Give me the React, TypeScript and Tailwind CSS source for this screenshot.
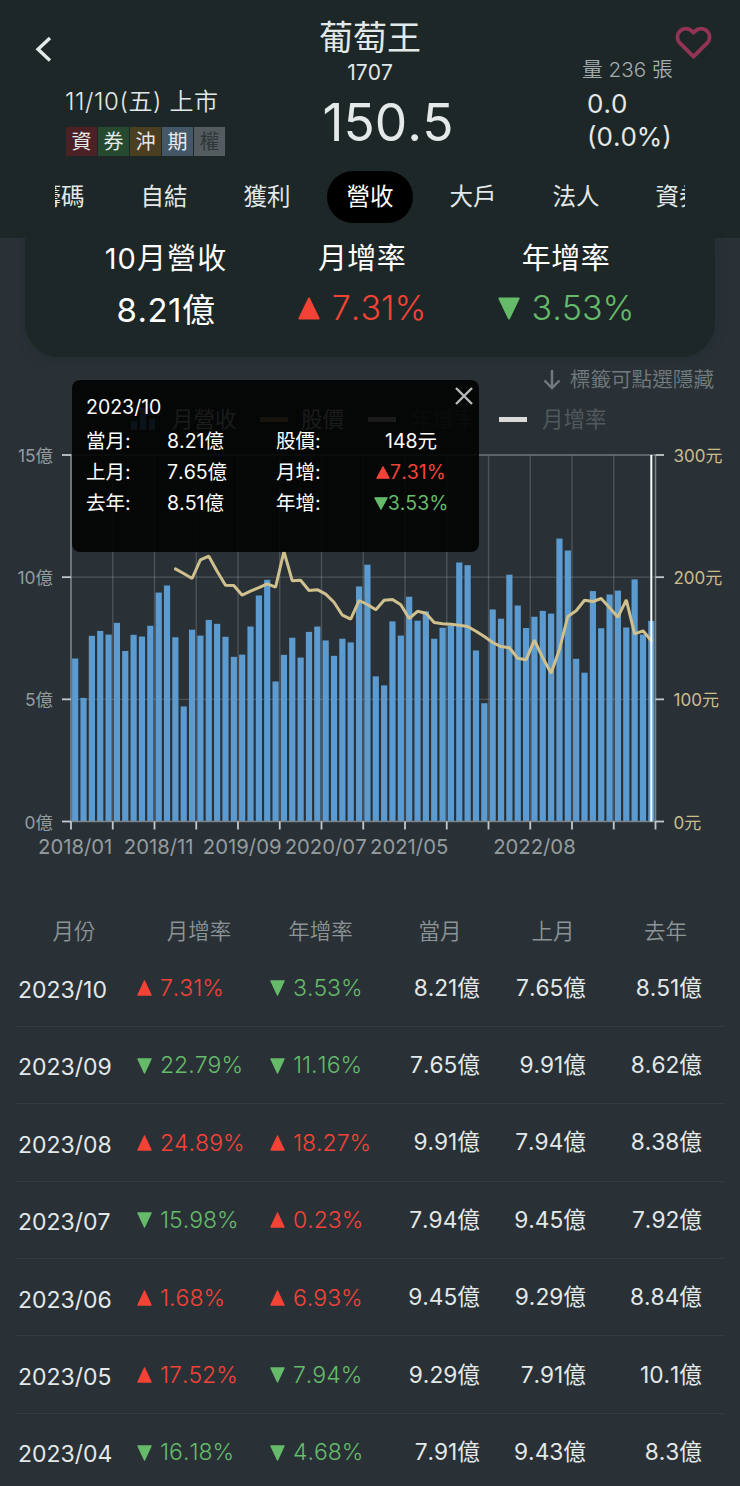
import { useState } from 'react';
import clsx from 'clsx';

/* ------------------------------------------------------------------ */
/*  Data                                                               */
/* ------------------------------------------------------------------ */

const TABS = ['籌碼', '自結', '獲利', '營收', '大戶', '法人', '資券'];

const BADGES = [
  { label: '資', className: 'bg-[#4c2125] text-[#e6eaea]' },
  { label: '券', className: 'bg-[#264a2f] text-[#e6eaea]' },
  { label: '沖', className: 'bg-[#4a3f20] text-[#e6eaea]' },
  { label: '期', className: 'bg-[#445766] text-[#e6eaea]' },
  { label: '權', className: 'bg-[#545c5f] text-[#2f3637]' },
];

// Monthly revenue in 億, 2018/01 – 2023/10
const REVENUE = [
  6.67, 5.06, 7.6, 7.8, 7.65, 8.13, 6.98, 7.64, 7.57, 8.01, 9.37, 9.66,
  7.54, 4.71, 7.85, 7.61, 8.25, 8.09, 7.56, 6.74, 6.83, 7.98, 9.25, 9.89,
  5.73, 6.82, 7.52, 6.71, 7.76, 7.98, 7.41, 6.78, 7.48, 7.33, 9.62, 10.51,
  5.94, 5.57, 8.19, 7.61, 9.2, 8.22, 8.6, 7.48, 7.93, 8.02, 10.6, 10.49,
  7.0, 4.84, 8.68, 8.3, 10.1, 8.84, 7.92, 8.38, 8.62, 8.51, 11.58, 11.09,
  6.66, 6.09, 9.43, 7.91, 9.29, 9.45, 7.94, 9.91, 7.65, 8.21,
];

// Monthly close in 元, starts one year after the revenue series
const PRICE_START = 12;
const PRICE = [
  206.8, 203, 198.9, 214.2, 217.2, 204.9, 193.4, 193.2, 185.2, 188.5, 191.5, 194.6,
  191.8, 221, 197, 197.5, 189.1, 189.7, 186.1, 179.5, 168.9, 165.6, 180.9, 177.6,
  173.3, 181.1, 181.7, 177.4, 166.2, 172.1, 170.5, 162.9, 161.8, 161.5, 160.7, 159.6,
  155.8, 151.4, 146.5, 143.2, 142.2, 133.7, 132.4, 148.4, 134, 121.4, 141, 167.8,
  172.5, 181.1, 180.1, 182.5, 174.9, 167.2, 181.5, 153.6, 156.1, 148,
];

const X_LABELS = [
  { index: 0, label: '2018/01' },
  { index: 10, label: '2018/11' },
  { index: 20, label: '2019/09' },
  { index: 30, label: '2020/07' },
  { index: 40, label: '2021/05' },
  { index: 55, label: '2022/08' },
];

const ROWS = [
  { month: '2023/10', mom: 7.31, yoy: -3.53, current: '8.21億', previous: '7.65億', lastYear: '8.51億' },
  { month: '2023/09', mom: -22.79, yoy: -11.16, current: '7.65億', previous: '9.91億', lastYear: '8.62億' },
  { month: '2023/08', mom: 24.89, yoy: 18.27, current: '9.91億', previous: '7.94億', lastYear: '8.38億' },
  { month: '2023/07', mom: -15.98, yoy: 0.23, current: '7.94億', previous: '9.45億', lastYear: '7.92億' },
  { month: '2023/06', mom: 1.68, yoy: 6.93, current: '9.45億', previous: '9.29億', lastYear: '8.84億' },
  { month: '2023/05', mom: 17.52, yoy: -7.94, current: '9.29億', previous: '7.91億', lastYear: '10.1億' },
  { month: '2023/04', mom: -16.18, yoy: -4.68, current: '7.91億', previous: '9.43億', lastYear: '8.3億' },
];

/* ------------------------------------------------------------------ */
/*  Small pieces                                                       */
/* ------------------------------------------------------------------ */

function Triangle({ up, className }: { up: boolean; className: string }) {
  return (
    <svg viewBox="0 0 16 16" fill="currentColor" stroke="currentColor" strokeWidth={1.4} strokeLinejoin="round" className={clsx('shrink-0', className)} preserveAspectRatio="none">
      <path d={up ? 'M8 1 L15 15 H1 Z' : 'M8 15 L15 1 H1 Z'} />
    </svg>
  );
}

function Change({ value, className, iconClassName }: { value: number; className: string; iconClassName: string }) {
  const up = value >= 0;
  return (
    <span className={clsx('flex items-center whitespace-nowrap', up ? 'text-[#f44336]' : 'text-[#66bb6a]', className)}>
      <Triangle up={up} className={iconClassName} />
      <span>{Math.abs(value).toFixed(2)}%</span>
    </span>
  );
}

/* ------------------------------------------------------------------ */
/*  Header                                                             */
/* ------------------------------------------------------------------ */

function Header() {
  const [active, setActive] = useState('營收');

  return (
    <header className="h-[238px] bg-[#1d2727] text-[#e3e8e8]">
      <div className="flex h-[171px]">
        <div className="w-[310px] shrink-0 pt-[34px]">
          <button className="ml-[33px] block h-[30px] w-[22px]" aria-label="返回">
            <svg viewBox="0 0 22 30" fill="none" stroke="currentColor" strokeWidth={3.4} className="h-full w-full">
              <path d="M17 4 L5 15.2 L17 26.5" />
            </svg>
          </button>
          <div className="mt-[21px] ml-[65px] text-[24px] leading-[34px] font-[350] tracking-[0.6px]">11/10(五) 上市</div>
          <div className="mt-[8px] ml-[66px] flex gap-px">
            {BADGES.map((b) => (
              <span key={b.label} className={clsx('flex h-[29px] w-[31px] items-center justify-center text-[20px] leading-none', b.className)}>
                {b.label}
              </span>
            ))}
          </div>
        </div>

        <div className="flex w-[120px] shrink-0 flex-col items-center pt-[15px]">
          <h1 className="text-[34px] leading-[46px] whitespace-nowrap">葡萄王</h1>
          <div className="-mt-px text-[21px] leading-[26px]">1707</div>
          <div className="ml-[36px] text-[51.5px] leading-[72px] whitespace-nowrap">150.5</div>
        </div>

        <div className="relative flex-1 pt-[53px] pl-[152px]">
          <div className="text-[20.7px] leading-[34px] font-[350] whitespace-nowrap text-[#a5adae]">量 236 張</div>
          <div className="ml-[5px] text-[26px] leading-[33px]">
            0.0
            <br />
            (0.0%)
          </div>
          <button className="absolute top-[24px] right-[28px] h-[37px] w-[37px] text-[#933457]" aria-label="收藏">
            <svg viewBox="0 0 24 24" fill="none" stroke="currentColor" strokeWidth={2.5} strokeLinejoin="round" overflow="visible" className="h-full w-full">
              <path d="M20.84 4.61a5.5 5.5 0 0 0-7.78 0L12 5.67l-1.06-1.06a5.5 5.5 0 0 0-7.78 7.78l1.06 1.06L12 21.23l7.78-7.78 1.06-1.06a5.5 5.5 0 0 0 0-7.78z" />
            </svg>
          </button>
        </div>
      </div>

      <nav className="mx-auto flex w-[630px] justify-center overflow-hidden">
        {TABS.map((tab) => (
          <div key={tab} className="flex w-[103px] shrink-0 justify-center">
            <button
              onClick={() => setActive(tab)}
              className={clsx('h-[52px] w-[86px] rounded-full text-[23.5px]', active === tab && 'bg-black text-white')}
            >
              {tab}
            </button>
          </div>
        ))}
      </nav>
    </header>
  );
}

/* ------------------------------------------------------------------ */
/*  Summary card                                                       */
/* ------------------------------------------------------------------ */

function Summary() {
  return (
    <section className="mx-[25px] flex h-[119px] rounded-b-[34px] bg-[#1d2727] text-white shadow-[0_2px_10px_rgba(29,39,39,0.5)]">
      <div className="ml-[41px] flex w-[200px] flex-col items-center">
        <div className="pt-px text-[29px] leading-[40px] tracking-[1.1px]">10月營收</div>
        <div className="mt-[11px] text-[33px] leading-[40px] tracking-[0.5px]">8.21億</div>
      </div>
      <div className="flex w-[192px] flex-col items-center">
        <div className="pt-px text-[29px] leading-[40px] tracking-[0.3px]">月增率</div>
        <Change value={7.31} className="mt-[9px] gap-[12px] text-[34px] leading-[40px] font-light" iconClassName="h-[23px] w-[22px]" />
      </div>
      <div className="flex w-[216px] flex-col items-center">
        <div className="pt-px text-[29px] leading-[40px] tracking-[0.5px]">年增率</div>
        <Change value={-3.53} className="mt-[9px] gap-[12px] text-[34px] leading-[40px] font-light" iconClassName="h-[23px] w-[22px]" />
      </div>
    </section>
  );
}

/* ------------------------------------------------------------------ */
/*  Chart                                                              */
/* ------------------------------------------------------------------ */

const LEFT = 71;
const RIGHT = 655.5;
const TOP = 15;
const BOTTOM = 381.5;
const BAND = (RIGHT - LEFT) / REVENUE.length;

const centerX = (i: number) => LEFT + BAND * (i + 0.5);
const revenueY = (v: number) => BOTTOM - (v / 15) * (BOTTOM - TOP);
const priceY = (v: number) => BOTTOM - (v / 300) * (BOTTOM - TOP);

function RevenueChart() {
  const splits = Array.from({ length: 15 }, (_, i) => LEFT + BAND * i * 5);
  const points = PRICE.map((v, i) => `${centerX(PRICE_START + i).toFixed(1)},${priceY(v).toFixed(1)}`).join(' ');

  return (
    <svg width={740} height={430} viewBox="0 0 740 430" className="block">
      {/* Grid */}
      <g stroke="#ffffff" strokeOpacity={0.17} strokeWidth={1.4}>
        {splits.map((x) => (
          <line key={x} x1={x} x2={x} y1={TOP} y2={BOTTOM} />
        ))}
        {[5, 10].map((v) => (
          <line key={v} x1={LEFT} x2={RIGHT} y1={revenueY(v)} y2={revenueY(v)} />
        ))}
      </g>
      <line x1={LEFT} x2={RIGHT} y1={TOP} y2={TOP} stroke="#6d7678" strokeWidth={1.4} />

      {/* Revenue bars */}
      {REVENUE.map((v, i) => (
        <rect key={i} x={centerX(i) - 3.1} y={revenueY(v)} width={6.2} height={BOTTOM - revenueY(v)} fill="#5b9bd0" />
      ))}

      {/* Axis lines and ticks */}
      <g stroke="#7b8486" strokeWidth={1.5}>
        <line x1={LEFT} x2={LEFT} y1={TOP} y2={BOTTOM} />
        <line x1={RIGHT} x2={RIGHT} y1={TOP} y2={BOTTOM} />
        <line x1={LEFT} x2={RIGHT} y1={BOTTOM} y2={BOTTOM} />
      </g>
      <g stroke="#c3c9ca" strokeWidth={1.8}>
        {splits.map((x) => (
          <line key={x} x1={x} x2={x} y1={BOTTOM} y2={BOTTOM + 8} />
        ))}
        {[0, 5, 10, 15].map((v) => (
          <g key={v}>
            <line x1={62} x2={LEFT} y1={revenueY(v)} y2={revenueY(v)} />
            <line x1={RIGHT} x2={664} y1={revenueY(v)} y2={revenueY(v)} />
          </g>
        ))}
      </g>

      {/* Price line and selected month */}
      <polyline points={points} fill="none" stroke="#cfc08d" strokeWidth={3} strokeLinecap="round" strokeLinejoin="bevel" />
      <line x1={centerX(69)} x2={centerX(69)} y1={TOP} y2={BOTTOM} stroke="#ffffff" strokeWidth={2} />

      {/* Labels */}
      <g fill="#959c9e" fontSize={17.4}>
        {[0, 5, 10, 15].map((v) => (
          <text key={v} x={53} y={revenueY(v) + 7} textAnchor="end">{v}億</text>
        ))}
      </g>
      <g fill="#cbbd8c" fontSize={17}>
        {[0, 100, 200, 300].map((v) => (
          <text key={v} x={673.5} y={priceY(v) + 7}>{v}元</text>
        ))}
      </g>
      <g fill="#959c9e" fontSize={20.3} textAnchor="middle">
        {X_LABELS.map(({ index, label }) => (
          <text key={label} x={centerX(index)} y={414}>{label}</text>
        ))}
      </g>
    </svg>
  );
}

function Legend() {
  return (
    <div className="flex h-[30px] items-center pl-[131px] text-[21.5px] leading-[30px] whitespace-nowrap text-[#d5d8d8]">
      <svg viewBox="0 0 24 22" className="mr-[17px] h-[22px] w-[24px] text-[#5b9bd0]" fill="currentColor">
        <path d="M0 13h6v9H0zM9 0h6v22H9zM18 11h6v11h-6z" />
      </svg>
      <span className="w-[65px]">月營收</span>
      <span className="mr-[13px] ml-[23px] h-[5px] w-[28px] bg-[#cf9a6a]" />
      <span className="w-[44px]">股價</span>
      <span className="mr-[15px] ml-[23px] h-[5px] w-[28px] bg-[#dadada]" />
      <span className="w-[65px] text-[#51595d]">年增率</span>
      <span className="mr-[15px] ml-[23px] h-[5px] w-[28px] bg-[#dadada]" />
      <span className="w-[65px] text-[#51595d]">月增率</span>
    </div>
  );
}

function Tooltip({ onClose }: { onClose: () => void }) {
  return (
    <div className="absolute top-[23px] left-[72px] h-[172px] w-[407px] rounded-lg bg-black/88 pt-[12px] pl-[14px] text-[19.5px] leading-[31px] text-white">
      <button onClick={onClose} className="absolute top-[7px] right-[6px] h-[18px] w-[18px] text-[#b9bcbc]" aria-label="關閉">
        <svg viewBox="0 0 18 18" fill="none" stroke="currentColor" strokeWidth={2.4} className="h-full w-full">
          <path d="M1 1 L17 17 M17 1 L1 17" />
        </svg>
      </button>
      <div className="text-[19.5px]">2023/10</div>
      <div className="mt-[3px] grid grid-cols-[81px_109px_84px_102px]">
        <span>當月:</span>
        <span>8.21億</span>
        <span>股價:</span>
        <span className="text-center">148元</span>
        <span>上月:</span>
        <span>7.65億</span>
        <span>月增:</span>
        <Change value={7.31} className="justify-center" iconClassName="h-[13px] w-[14px]" />
        <span>去年:</span>
        <span>8.51億</span>
        <span>年增:</span>
        <Change value={-3.53} className="justify-center" iconClassName="h-[13px] w-[14px]" />
      </div>
    </div>
  );
}

/* ------------------------------------------------------------------ */
/*  Table                                                              */
/* ------------------------------------------------------------------ */

function RevenueTable() {
  return (
    <section className="text-[23px]">
      <div className="flex h-[37px] text-center text-[21.5px] leading-[36px] font-[350] text-[#8d9496]">
        <span className="ml-[14px] w-[120px]">月份</span>
        <span className="w-[130px]">月增率</span>
        <span className="w-[113px]">年增率</span>
        <span className="w-[126px]">當月</span>
        <span className="w-[100px]">上月</span>
        <span className="w-[125px]">去年</span>
      </div>
      {ROWS.map((row) => (
        <div key={row.month} className="mx-[16px] flex h-[77.4px] items-center border-b border-[#323e42] text-[#e3e8e8]">
          <span className="w-[121px] pt-[5px] pl-[2px]">{row.month}</span>
          <Change value={row.mom} className="w-[133px] gap-[8px] pt-px font-[350]" iconClassName="h-[16px] w-[15px]" />
          <Change value={row.yoy} className="w-[116px] gap-[8px] pt-px font-[350]" iconClassName="h-[16px] w-[15px]" />
          <span className="w-[94px] text-right text-[22.7px]">{row.current}</span>
          <span className="w-[106px] text-right text-[22.7px]">{row.previous}</span>
          <span className="w-[116px] text-right text-[22.7px]">{row.lastYear}</span>
        </div>
      ))}
    </section>
  );
}

/* ------------------------------------------------------------------ */
/*  Page                                                               */
/* ------------------------------------------------------------------ */

export default function App() {
  const [showTooltip, setShowTooltip] = useState(true);

  return (
    <div className="h-[1486px] w-[740px] overflow-hidden bg-[#293137] font-['Inter','Noto_Sans_CJK_TC',sans-serif] [font-kerning:none]">
      <Header />
      <Summary />
      <section className="relative">
        <div className="flex h-[44px] items-center justify-end pt-[2px] pr-[26px] text-[20.6px] font-[350] text-[#747b7e]">
          <svg viewBox="0 0 18 20" fill="none" stroke="currentColor" strokeWidth={2.4} className="mr-[9px] h-[20px] w-[18px]">
            <path d="M9 0 V18 M1.5 10.5 L9 18 L16.5 10.5" />
          </svg>
          標籤可點選隱藏
        </div>
        <div className="pt-[3px]">
          <Legend />
        </div>
        <div className="pt-[6px]">
          <RevenueChart />
        </div>
        {showTooltip && <Tooltip onClose={() => setShowTooltip(false)} />}
      </section>
      <div className="pt-[42.5px]">
        <RevenueTable />
      </div>
    </div>
  );
}
